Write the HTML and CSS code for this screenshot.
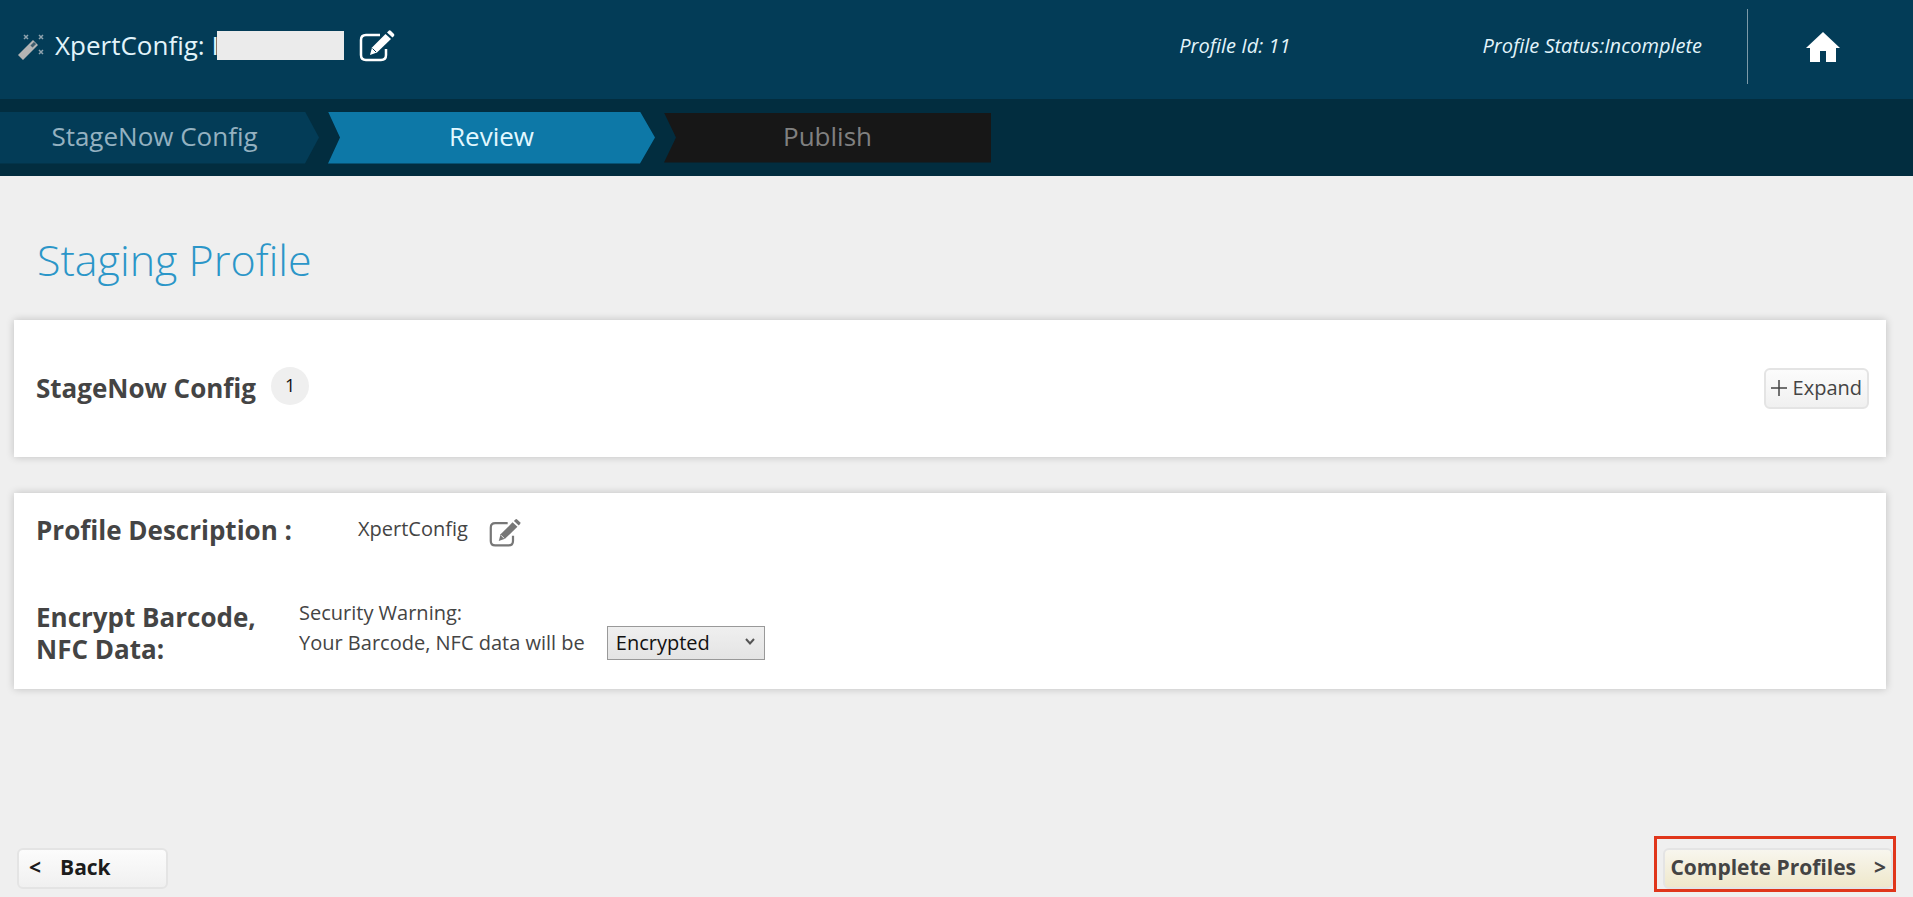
FILE: index.html
```html
<!DOCTYPE html>
<html lang="en">
<head>
<meta charset="UTF-8">
<meta name="viewport" content="width=device-width, initial-scale=1.0">
<title>StageNow</title>
<link rel="stylesheet" href="styles.css">
</head>
<body>

<svg class="defs" aria-hidden="true">
  <symbol id="icon-edit" viewBox="0 0 36 32">
    <path d="M21 5H7Q2 5 2 10V25Q2 30 7 30H22Q27 30 27 25V19" fill="none" stroke="currentColor" stroke-width="2.5"/>
    <path d="M11 25L13 17.500L26.500 4L32 9L18 22.500Z" fill="currentColor"/>
    <path d="M28 2.500L30 .5Q31 0 32 1L35 4Q35.800 5 35 6L33.500 7.500Z" fill="currentColor"/>
    <path d="M13.500 18.500L17 22" stroke-width="1" stroke="var(--icon-bg)"/>
  </symbol>
</svg>

<header class="header">
  <svg class="wand" viewBox="0 0 26 26" aria-hidden="true">
    <path d="M2.500 23.500L17.500 8.500" stroke="#b4b4b4" stroke-width="7" stroke-linejoin="round"/>
    <path d="M13.500 12.500L17 9" stroke="#3f5d6e" stroke-width="3"/>
    <path d="M6 1L10 5M10 1L6 5M21 1L25 5M25 1L21 5M21 16L25 20M25 16L21 20" stroke="#8fa3ae" stroke-width="1.500"/>
  </svg>
  <h1 class="profile-name">XpertConfig: I<span class="masked"></span></h1>
  <button class="icon-button edit-name" aria-label="Edit profile name">
    <svg width="36" height="32"><use href="#icon-edit"/></svg>
  </button>
  <span class="profile-id">Profile Id: 11</span>
  <span class="profile-status">Profile Status:Incomplete</span>
  <a class="home" href="#" aria-label="Home">
    <svg width="36" height="32" viewBox="0 0 36 32">
      <path d="M18 1L35 17H31V31H21V20H15V31H5V17H1Z" fill="#fff"/>
    </svg>
  </a>
</header>

<nav class="steps">
  <a class="step done" href="#">StageNow Config</a>
  <a class="step active" href="#" aria-current="step">Review</a>
  <a class="step pending" href="#">Publish</a>
</nav>

<main class="main">
  <h2 class="title">Staging Profile</h2>

  <section class="card config">
    <h3 class="label">StageNow Config</h3>
    <span class="badge">1</span>
    <button class="button expand">
      <svg width="16" height="16" viewBox="0 0 16 16" aria-hidden="true"><path d="M8 0V16M0 8H16" stroke="#444" stroke-width="1.500"/></svg>
      Expand
    </button>
  </section>

  <section class="card details">
    <div class="row">
      <h3 class="label description-label">Profile Description :</h3>
      <span class="text">XpertConfig</span>
      <button class="icon-button edit-description" aria-label="Edit description">
        <svg width="32" height="30"><use href="#icon-edit"/></svg>
      </button>
    </div>
    <div class="row encrypt">
      <h3 class="label encrypt-label">Encrypt Barcode,<br>NFC Data:</h3>
      <label class="text" for="encryption">Security Warning:<br>Your Barcode, NFC data will be</label>
      <div class="select">
        <select id="encryption">
          <option>Encrypted</option>
          <option>Not Encrypted</option>
        </select>
        <svg class="chevron" width="10" height="8" viewBox="0 0 10 8" aria-hidden="true"><path d="M1 1L5 5.500L9 1" fill="none" stroke="#555" stroke-width="2"/></svg>
      </div>
    </div>
  </section>
</main>

<footer class="footer">
  <button class="button back"><span>&lt;</span>Back</button>
  <div class="highlight">
    <button class="button complete">Complete Profiles<span>&gt;</span></button>
  </div>
</footer>

</body>
</html>
```
FILE: styles.css
```css
* {
  box-sizing: border-box;
}
body {
  display: flex;
  flex-direction: column;
  min-height: 100vh;
  margin: 0;
  font-family: "Open Sans", "Noto Sans", sans-serif;
  font-size: 20px;
  color: #444;
  background-color: #efefef;
}
h1, h2, h3 {
  margin: 0;
}
button, select {
  font-family: inherit;
  font-size: 20px;
  cursor: pointer;
}
.defs {
  display: none;
}

/* header */
.header {
  --icon-bg: #033c57;
  display: flex;
  align-items: center;
  height: 99px;
  padding: 0 0 6px 18px;
  color: #e2f4fb;
  background-color: #033c57;
}
.wand {
  width: 26px;
  height: 26px;
  margin-right: 11px;
}
.profile-name {
  display: flex;
  align-items: center;
  padding-bottom: 3px;
  font-size: 26px;
  font-weight: 400;
  line-height: 32px;
  white-space: pre;
}
.masked {
  width: 127px;
  height: 29px;
  margin-left: -2px;
  background-color: #ebebeb;
}
.icon-button {
  display: flex;
  padding: 0;
  border: none;
  color: inherit;
  background: none;
}
.edit-name {
  margin: 0 0 2px 15px;
  color: #fff;
}
.profile-id, .profile-status {
  padding-bottom: 2px;
  font-style: italic;
}
.profile-id {
  margin-left: auto;
  margin-right: 192px;
}
.home {
  display: flex;
  align-items: center;
  height: 75px;
  margin-left: 45px;
  padding: 0 72px 0 57px;
  border-left: 1px solid #7d9aa8;
}

/* wizard steps */
.steps {
  display: flex;
  align-items: center;
  gap: 9px;
  height: 77px;
  background-color: #022d3f;
}
.step {
  width: 327px;
  height: 52px;
  font-size: 26px;
  line-height: 48px;
  text-align: center;
  text-decoration: none;
}
.done {
  width: 319px;
  padding-right: 10px;
  color: #94b1c0;
  background-color: #033c57;
  clip-path: polygon(0 0, calc(100% - 14px) 0, 100% 50%, calc(100% - 14px) 100%, 0 100%);
}
.active {
  color: #e2f8ff;
  background-color: #0d78a7;
  clip-path: polygon(0 0, calc(100% - 15px) 0, 100% 50%, calc(100% - 15px) 100%, 0 100%, 12px 50%);
}
.pending {
  height: 50px;
  line-height: 46px;
  color: #808080;
  background-color: #171717;
  clip-path: polygon(0 0, 100% 0, 100% 100%, 0 100%, 12px 50%);
}

/* content */
.main {
  padding: 0 27px 0 14px;
}
.title {
  padding: 54px 0 30px 23px;
  font-size: 43px;
  font-weight: 300;
  line-height: 60px;
  color: #2b96c8;
}
.card {
  background-color: #fff;
  box-shadow: 0 0 8px rgba(0, 0, 0, 0.2);
}
.label {
  font-size: 26px;
  font-weight: 700;
  line-height: 32px;
}
.config {
  display: flex;
  align-items: center;
  height: 137px;
  margin-bottom: 36px;
  padding: 0 17px 0 22px;
}
.config .label {
  padding-bottom: 2px;
}
.badge {
  width: 38px;
  height: 38px;
  margin: 0 0 6px 15px;
  border-radius: 50%;
  font-size: 18px;
  line-height: 36px;
  text-align: center;
  color: #111;
  background-color: #efefef;
}
.button {
  display: flex;
  align-items: center;
  height: 41px;
  border: 2px solid #e4e4e4;
  border-radius: 6px;
  background: linear-gradient(#fcfcfc, #f0f0f0);
}
.expand {
  gap: 6px;
  margin-left: auto;
  padding: 0 5px 2px;
  color: #444;
}
.details {
  --icon-bg: #fff;
  padding: 21px 22px 24px;
}
.row {
  display: flex;
}
.text {
  line-height: 30px;
}
.description-label {
  width: 322px;
}
.edit-description {
  margin: 4px 0 0 21px;
  color: #777;
}
.encrypt {
  margin-top: 50px;
}
.encrypt-label {
  width: 263px;
  padding-top: 3px;
}
.select {
  position: relative;
  width: 158px;
  margin: 28px 0 0 22px;
}
.select select {
  width: 100%;
  height: 34px;
  padding: 0 8px 2px;
  border: 1px solid #999;
  border-radius: 0;
  color: #111;
  background: linear-gradient(#efefef, #e4e4e4);
  appearance: none;
}
.chevron {
  position: absolute;
  top: 12px;
  right: 10px;
  pointer-events: none;
}

/* bottom buttons */
.footer {
  display: flex;
  align-items: center;
  justify-content: space-between;
  margin-top: auto;
  padding: 0 17px 5px;
}
.back, .complete {
  padding: 0 7px 3px 10px;
  font-size: 21px;
  font-weight: 700;
}
.back {
  gap: 19px;
  width: 151px;
  margin-top: 9px;
  color: #1c1c1c;
}
.highlight {
  padding: 9px 0 0 6px;
  border: 3px solid #e0361b;
}
.complete {
  gap: 18px;
  padding: 0 5px 3px;
  color: #444;
  background: linear-gradient(#f8f6ee, #efe8cb);
}
```
